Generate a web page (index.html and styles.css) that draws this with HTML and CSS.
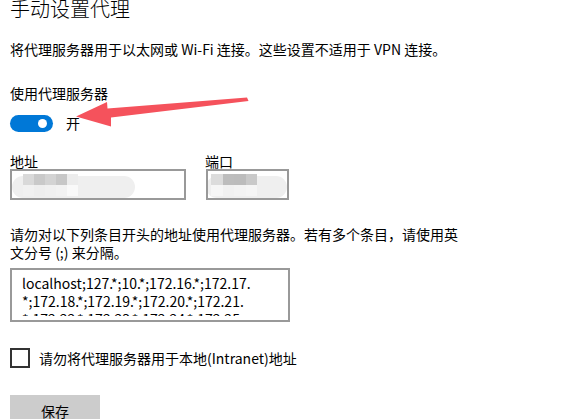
FILE: index.html
```html
<!DOCTYPE html>
<html lang="zh-CN">
<head>
<meta charset="utf-8">
<title>手动设置代理</title>
<link rel="stylesheet" href="styles.css">
</head>
<body>
<main class="page">
  <h1 class="title">手动设置代理</h1>
  <p class="desc">将代理服务器用于以太网或 Wi-Fi 连接。这些设置不适用于 VPN 连接。</p>
  <div class="label-use">使用代理服务器</div>
  <div class="toggle-row">
    <span class="toggle"><span class="knob"></span></span>
    <span class="toggle-text">开</span>
  </div>
  <div class="fields">
    <div class="field field-addr">
      <div class="field-label">地址</div>
      <div class="box box-addr">
        <div class="smudge smudge-addr">
          <div class="mosaic m5">
            <i style="background:#d9d9d9"></i><i style="background:#c9c9c9"></i><i style="background:#d3d3d3"></i><i style="background:#c7c7c7"></i><i style="background:#ececec"></i>
            <i style="background:#f1f1f1"></i><i style="background:#eeeeee"></i><i style="background:#f0f0f0"></i><i style="background:#f2f2f2"></i><i style="background:#f9f9f9"></i>
          </div>
        </div>
      </div>
    </div>
    <div class="field field-port">
      <div class="field-label">端口</div>
      <div class="box box-port">
        <div class="smudge smudge-port">
          <div class="mosaic m4">
            <i style="background:#dcdcdc"></i><i style="background:#bdbdbd"></i><i style="background:#bcbcbc"></i><i style="background:#c9c9c9"></i>
            <i style="background:#f6f6f6"></i><i style="background:#f1f1f1"></i><i style="background:#f3f3f3"></i><i style="background:#f5f5f5"></i>
          </div>
        </div>
      </div>
    </div>
  </div>
  <p class="note">请勿对以下列条目开头的地址使用代理服务器。若有多个条目，请使用英文分号 (;) 来分隔。</p>
  <div class="textarea">
    <div class="textarea-inner">
      <span class="ta-line">localhost;127.*;10.*;172.16.*;172.17.</span>
      <span class="ta-line">*;172.18.*;172.19.*;172.20.*;172.21.</span>
      <span class="ta-line">*;172.22.*;172.23.*;172.24.*;172.25.</span>
    </div>
  </div>
  <label class="check-row">
    <span class="checkbox"></span>
    <span class="check-text">请勿将代理服务器用于本地(Intranet)地址</span>
  </label>
  <div class="btn-row"><span class="btn">保存</span></div>
</main>
<svg class="arrow" width="571" height="419" viewBox="0 0 571 419" aria-hidden="true">
  <polygon points="76,116.5 107,102 107.5,108.5 247,97.5 248.5,101 111,117.5 111,126.5" fill="#f5525c"/>
</svg>
</body>
</html>
```
FILE: styles.css
```css
html, body {
  margin: 0;
  padding: 0;
  background: #ffffff;
  width: 571px;
  height: 419px;
  overflow: hidden;
}
body {
  position: relative;
  font-family: "Noto Sans CJK SC", "Noto Sans", sans-serif;
  color: #000000;
  font-size: 14px;
}
.page {
  display: flex;
  flex-direction: column;
  align-items: flex-start;
  padding: 0 10px;
}
.title {
  margin: -1px 0 0 0;
  font-size: 20px;
  line-height: 20px;
  font-weight: 300;
}
.desc {
  margin: 20px 0 0 0;
  line-height: 20px;
}
.label-use {
  margin-top: 24px;
  line-height: 20px;
}
.toggle-row {
  margin-top: 10px;
  display: flex;
  align-items: center;
  gap: 13px;
}
.toggle {
  width: 43px;
  height: 17px;
  border-radius: 9px;
  background: #0078d7;
  display: flex;
  align-items: center;
  justify-content: flex-end;
  padding-right: 6px;
  box-sizing: border-box;
}
.knob {
  width: 9px;
  height: 9px;
  border-radius: 50%;
  background: #ffffff;
}
.toggle-text {
  line-height: 20px;
}
.fields {
  margin-top: 20px;
  display: flex;
  gap: 20px;
}
.field-label {
  line-height: 16px;
  height: 16px;
}
.field-port .field-label {
  margin-left: -1px;
}
.box {
  height: 31px;
  border: 2px solid #999999;
  box-sizing: border-box;
  background: #ffffff;
  display: flex;
  align-items: center;
  overflow: hidden;
}
.box-addr { width: 176px; }
.box-port { width: 83px; }
.smudge {
  display: flex;
  align-items: center;
  background: #efefef;
  border-radius: 11px;
  height: 22px;
  margin-top: 4px;
}
.smudge-addr {
  width: 112px;
  padding-left: 11px;
}
.smudge-port {
  width: 80px;
  padding-left: 5px;
  margin-left: -2px;
}
.mosaic {
  display: grid;
  grid-auto-rows: 11px;
  margin-top: -4px;
}
.m5 { grid-template-columns: repeat(5, 11px); }
.m4 { grid-template-columns: repeat(4, 11.5px); }
.mosaic i {
  display: block;
}
.note {
  margin: 25px 0 0 0;
  width: 452px;
  line-height: 18px;
}
.textarea {
  margin-top: 7px;
  width: 280px;
  height: 54px;
  border: 2px solid #999999;
  box-sizing: border-box;
  padding: 4px 10px 0 10px;
}
.textarea-inner {
  height: 42px;
  overflow: hidden;
  display: flex;
  flex-direction: column;
  line-height: 18px;
}
.ta-line {
  display: block;
  white-space: nowrap;
}
.check-row {
  margin-top: 26px;
  display: flex;
  align-items: center;
  gap: 9px;
}
.checkbox {
  width: 20px;
  height: 20px;
  border: 2px solid #333333;
  box-sizing: border-box;
}
.check-text {
  line-height: 20px;
}
.btn-row {
  margin-top: 27px;
}
.btn {
  display: flex;
  align-items: center;
  justify-content: center;
  width: 90px;
  height: 32px;
  background: #cccccc;
  line-height: 20px;
}
.arrow {
  position: absolute;
  left: 0;
  top: 0;
  pointer-events: none;
}
```
